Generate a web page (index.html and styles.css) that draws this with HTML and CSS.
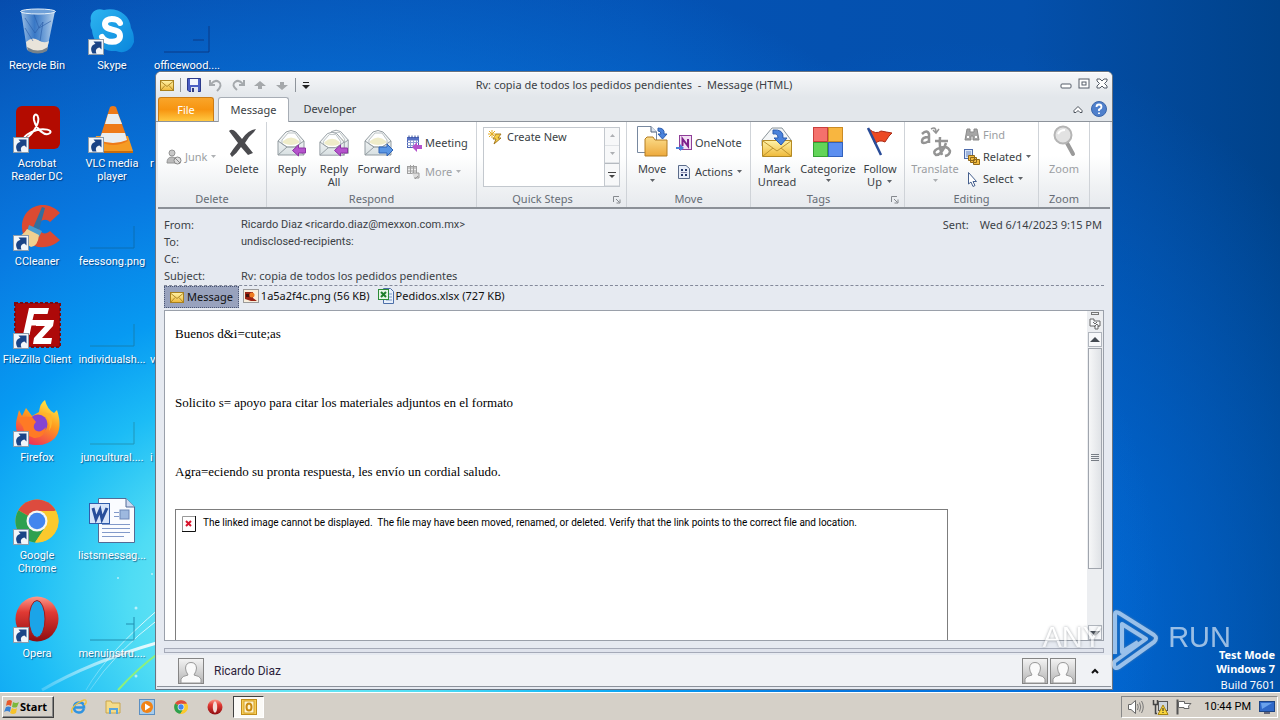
FILE: index.html
```html
<!DOCTYPE html>
<html lang="en">
<head>
<meta charset="utf-8">
<title>Rv: copia de todos los pedidos pendientes - Message (HTML)</title>
<link rel="stylesheet" href="styles.css">
</head>
<body>
<svg class="defs" aria-hidden="true">
  <defs>
    <linearGradient id="g-env" x1="0" y1="0" x2="0" y2="1"><stop offset="0" stop-color="#fff3a8"/><stop offset="1" stop-color="#efb93a"/></linearGradient>
    <linearGradient id="g-grey" x1="0" y1="0" x2="0" y2="1"><stop offset="0" stop-color="#fff"/><stop offset="1" stop-color="#d8e0e2"/></linearGradient>
    <linearGradient id="g-avatar" x1="0" y1="0" x2="0" y2="1"><stop offset="0" stop-color="#f4f4f4"/><stop offset="1" stop-color="#b4b4b4"/></linearGradient>
    <linearGradient id="g-opera" x1="0" y1="0" x2="0" y2="1"><stop offset="0" stop-color="#ff9a8a"/><stop offset=".35" stop-color="#e03a34"/><stop offset="1" stop-color="#8e0c10"/></linearGradient>
    <linearGradient id="g-fox" x1=".8" y1="0" x2=".3" y2="1"><stop offset="0" stop-color="#fff04a"/><stop offset=".45" stop-color="#ff9a1e"/><stop offset="1" stop-color="#ee2c5c"/></linearGradient>
    <linearGradient id="g-skype" x1="0" y1="0" x2="1" y2="1"><stop offset="0" stop-color="#2cb4f0"/><stop offset="1" stop-color="#0a86dc"/></linearGradient>
    <linearGradient id="g-bin" x1="0" y1="0" x2="1" y2="0"><stop offset="0" stop-color="#bcd6ee" stop-opacity=".85"/><stop offset=".4" stop-color="#5a90d0" stop-opacity=".6"/><stop offset="1" stop-color="#dcecf8" stop-opacity=".85"/></linearGradient>
    <linearGradient id="g-folder" x1="0" y1="0" x2="0" y2="1"><stop offset="0" stop-color="#fbdc8a"/><stop offset="1" stop-color="#eda93c"/></linearGradient>
    <linearGradient id="g-ray" x1="0" y1="1" x2="1" y2="0"><stop offset="0" stop-color="#fff" stop-opacity=".2"/><stop offset="1" stop-color="#fff" stop-opacity=".9"/></linearGradient>
    <symbol id="shortcut" viewBox="0 0 16 16"><rect x=".5" y=".5" width="15" height="15" fill="#f2f6fa" stroke="#8d9cab"/><path d="M4.500 14.500C1.500 9 4 5.500 7.500 5L5.500 2.500H13.500V10.500L11.500 8.500C8.500 9 7 11 8.500 14.500Z" fill="#1a4486"/></symbol>
    <symbol id="mail" viewBox="0 0 14 12"><rect x=".5" y="1.500" width="13" height="10" fill="url(#g-env)" stroke="#a8801e"/><path d="M1 2.500 7 7.500 13 2.500M1 11 5 6.500M13 11 9 6.500" fill="none" stroke="#b08a2a"/></symbol>
    <symbol id="person" viewBox="0 0 26 26"><rect x=".5" y=".5" width="25" height="25" fill="url(#g-avatar)" stroke="#858585"/><path d="M3 25V21Q4 18 10 17Q7.500 13 7.500 10Q8 4.500 13 4.500T18.500 10Q18.500 13 16 17Q22 18 23 21V25Z" fill="#fafafa" stroke="#999"/></symbol>
    <symbol id="openmail" viewBox="0 0 32 32"><path d="M2 15 10 6Q15 3 20 6L28 15V29H2Z" fill="url(#g-grey)" stroke="#939ca1"/><path d="M6 14 12 7H19L24 14V18L19 21H11L6 18Z" fill="#fff" stroke="#bcc3c5"/><path d="M7 15Q15 8 23 15V17Q15 21 7 17Z" fill="#efecc9"/><path d="M2 15 11 21H19L28 15M2 29 11 21M28 29 19 21" fill="none" stroke="#939ca1"/></symbol>
    <symbol id="chrome" viewBox="0 0 44 44"><circle cx="22" cy="22" r="21.500" fill="#fbc92d"/><path d="M22 22 3.400 11.200A21.500 21.500 0 0 1 40.600 11.200Z" fill="#dd4b3e"/><path d="M22 22 3.400 11.200A21.500 21.500 0 0 0 20 43.500L31 27Z" fill="#2da04f"/><path d="M22 12H41A21.500 21.500 0 0 1 20 43.500L31 27Z" fill="#fbc92d"/><circle cx="22" cy="22" r="10.500" fill="#f4f7f4"/><circle cx="22" cy="22" r="8.300" fill="#4285ee"/></symbol>
    <symbol id="opera" viewBox="0 0 44 46"><ellipse cx="22" cy="23" rx="21.500" ry="22.500" fill="url(#g-opera)"/><ellipse cx="22" cy="23" rx="8" ry="18.500" fill="#1ba4e8" stroke="#a31c1c"/></symbol>
    <symbol id="opera-small" viewBox="0 0 16 16"><circle cx="8" cy="8" r="7.500" fill="url(#g-opera)"/><ellipse cx="8" cy="8" rx="2.200" ry="5.800" fill="#f4dcd8"/></symbol>
    <symbol id="down" viewBox="0 0 7 4"><path d="M1 0H6L3.500 3Z" fill="currentColor"/></symbol>
    <symbol id="arrow-left" viewBox="0 0 14 12"><path d="M.5 6 6.500.5V3.500H13.500V8.500H6.500V11.500Z" fill="#b553cc" stroke="#8d34a4"/></symbol>
    <symbol id="launcher" viewBox="0 0 8 8"><path d="M.5 6V.5H6M3 3 6.500 6.500M7 3.500V7H3.500" fill="none" stroke="#85898e"/></symbol>
  </defs>
</svg>

<main class="desktop">
  <svg class="rays" viewBox="0 0 160 200" aria-hidden="true">
    <path d="M42 198Q90 170 160 150" fill="none" stroke="url(#g-ray)" stroke-width="3"/>
    <path d="M86 198Q108 160 160 116M90 198Q115 160 160 126" fill="none" stroke="url(#g-ray)"/>
    <path d="M118 198Q138 176 160 160" fill="none" stroke="#8df07c" stroke-width="2"/>
    <g fill="#fff" opacity=".6"><circle cx="118" cy="86" r="1"/><circle cx="136" cy="116" r="1.500"/><circle cx="136" cy="184" r="1.500"/><circle cx="152" cy="82" r="1"/></g>
  </svg>

  <div class="icons">
    <a class="shortcut" href="#"><svg viewBox="0 0 48 48"><path d="M8 3 14 42Q25 48 34 42L42 3Z" fill="url(#g-bin)"/><path d="M13 34Q19 28 25 32T36 33L34 41Q25 47 14 41Z" fill="#e9e4da"/><path d="M12 10 22 25 30 14 27 33M20 4 26 20 38 13M12 20 20 33" fill="none" stroke="#2a5ca6" opacity=".6"/><path d="M14 39Q25 46 35 39L34 43Q25 48 15 43Z" fill="#77828b"/><ellipse cx="25" cy="3.500" rx="17.500" ry="2.500" fill="#6fa0d8" stroke="#e8f2fa"/></svg><span>Recycle Bin</span></a>
    <a class="shortcut" href="#"><svg viewBox="0 0 48 48"><path d="M3 13C1 5 8-1 16 2C30-1 42 7 43 20C46 25 46 31 46 34C43 43 35 46 28 43C15 44 5 35 4 22C2 19 2 16 3 13Z" fill="url(#g-skype)"/><path d="M32 15C30 10 17 9 17 16C17 24 32 19 32 28C32 36 17 35 14 29" fill="none" stroke="#fff" stroke-width="6" stroke-linecap="round"/><use href="#shortcut" x="0" y="31" width="16" height="16"/></svg><span>Skype</span></a>
    <a class="shortcut" href="#"><svg viewBox="0 0 48 48"><path d="M1 44H46V18M30 32H41" fill="none" stroke="#0a3a86"/></svg><span>officewood....</span></a>

    <a class="shortcut" href="#"><svg viewBox="0 0 48 48"><rect x="3" y="0" width="44" height="43" rx="6" fill="#b30b00"/><path d="M12 33C20 29 27 16 25 11C24 7 20 8 21 14C23 23 32 31 37 27C40 24 31 22 24 24C17 26 9 31 12 33Z" fill="none" stroke="#fff" stroke-width="2"/><use href="#shortcut" x="0" y="31" width="16" height="16"/></svg><span>Acrobat Reader DC</span></a>
    <a class="shortcut" href="#"><svg viewBox="0 0 48 48"><path d="M8 30H40L45 45H4Z" fill="#f59b24"/><path d="M4 45H45V47H4Z" fill="#c86c0c"/><path d="M22 1Q25-1 28 1L40 35Q25 43 11 35Z" fill="#ee7a17"/><path d="M20 8H30L34 18H17ZM14 27H37L39 34Q25 40 11 34Z" fill="#e9edef"/><use href="#shortcut" x="0" y="31" width="16" height="16"/></svg><span>VLC media player</span></a>
    <a class="shortcut cut" href="#"><svg viewBox="0 0 48 48"></svg><span>r</span></a>

    <a class="shortcut" href="#"><svg viewBox="0 0 48 48"><path d="M47 9C32-7 8 3 9 24C10 44 33 49 47 36L37 27C33 31 27 30 26 24C25 17 32 13 37 18Z" fill="#dc4a31"/><path d="M20 24 29 3 32 4 26 26Z" fill="#336f9d"/><path d="M16 21 29 27 26 33 14 28Z" fill="#4a9dd0"/><path d="M14 25 26 31Q25 42 18 43L2 33Q10 32 14 25Z" fill="#f0d090"/><use href="#shortcut" x="0" y="31" width="16" height="16"/></svg><span>CCleaner</span></a>
    <a class="shortcut" href="#"><svg viewBox="0 0 48 48"><path d="M2 44H46V22" fill="none" stroke="#0b6fb4"/></svg><span>feessong.png</span></a>
    <i></i>

    <a class="shortcut" href="#"><svg viewBox="0 0 48 48"><rect x="2" y="1" width="45" height="44" fill="#ad0909" stroke="#7c0b12" stroke-width="2" stroke-dasharray="3 2"/><path d="M10 33 16 6H36L34.500 12H21L19.500 18H30L29 23.500H18.500L16.500 33ZM24 18H41L40 24L29 36H39L38 42H20L21 36L32 24H23Z" fill="#fff"/><use href="#shortcut" x="0" y="31" width="16" height="16"/></svg><span>FileZilla Client</span></a>
    <a class="shortcut" href="#"><svg viewBox="0 0 48 48"><path d="M2 44H46V22" fill="none" stroke="#1580b4"/></svg><span>individualsh...</span></a>
    <a class="shortcut cut" href="#"><svg viewBox="0 0 48 48"></svg><span>v</span></a>

    <a class="shortcut" href="#"><svg viewBox="0 0 48 48"><path d="M6 10 9 16 13 8 19 16 26 12Q27 3 32 0Q34 9 41 13L44 10Q50 28 42 38Q34 46 22 45C8 44 0 32 4 18Z" fill="url(#g-fox)"/><circle cx="25" cy="24" r="9.500" fill="#8544d2"/><path d="M4 18Q11 16 19 17L23 22Q19 26 22 30Q27 34 33 27Q31 39 21 38Q11 35 10 27Z" fill="#ff7a25"/><path d="M30 12Q39 20 36 31Q41 24 38 14Z" fill="#ffb52d"/><use href="#shortcut" x="0" y="31" width="16" height="16"/></svg><span>Firefox</span></a>
    <a class="shortcut" href="#"><svg viewBox="0 0 48 48"><path d="M2 44H46V22" fill="none" stroke="#2195b8"/></svg><span>juncultural....</span></a>
    <a class="shortcut cut" href="#"><svg viewBox="0 0 48 48"></svg><span>i</span></a>

    <a class="shortcut" href="#"><svg viewBox="0 0 48 48"><use href="#chrome" x="2" y="1" width="44" height="44"/><use href="#shortcut" x="0" y="31" width="16" height="16"/></svg><span>Google Chrome</span></a>
    <a class="shortcut" href="#"><svg viewBox="0 0 48 48"><path d="M10.500.5H38L46.500 9V44.500H10.500Z" fill="#fafcff" stroke="#536b95"/><path d="M38 .5V9H46.500" fill="#cedaf0" stroke="#536b95"/><path d="M14 26.500H42M14 30.500H42M14 34.500H42M14 38.500H36M26 14.500H31M26 18.500H31" stroke="#8199c9"/><rect x="32" y="12" width="9" height="9" fill="#9db8df" stroke="#6d87b8"/><rect x="1.500" y="5.500" width="20" height="20" fill="#d8e5fa" stroke="#315dab"/><path d="M5 10 8 21 12 12 14 21 19 10" fill="none" stroke="#284e9b" stroke-width="3"/></svg><span>listsmessag...</span></a>
    <i></i>

    <a class="shortcut" href="#"><svg viewBox="0 0 48 48"><use href="#opera" x="2" y="0" width="44" height="46"/><use href="#shortcut" x="0" y="31" width="16" height="16"/></svg><span>Opera</span></a>
    <a class="shortcut" href="#"><svg viewBox="0 0 48 48"><path d="M2 44H46V21M38 28H46" fill="none" stroke="#208eb0"/></svg><span>menuinstru....</span></a>
  </div>

  <section class="window">
    <header class="titlebar">
      <div class="quick">
        <svg class="i14" viewBox="0 0 14 12"><use href="#mail"/></svg>
        <span class="bar"></span>
        <button aria-label="Save"><svg class="i14" viewBox="0 0 14 14"><path d="M.5.5H13.500V13.500H2L.5 12Z" fill="#4c5fc4" stroke="#2b3a8c"/><rect x="3" y="1" width="8" height="6" fill="#f2f5fd"/><rect x="4" y="9" width="7" height="5" fill="#dfe5f4"/><rect x="5" y="10" width="2" height="4" fill="#303c80"/></svg></button>
        <button aria-label="Undo"><svg class="i14" viewBox="0 0 14 14"><path d="M1 2V7H6M2 6Q6 1 10 4T8 13" fill="none" stroke="#a5a9ad" stroke-width="2"/></svg></button>
        <button aria-label="Redo"><svg class="i14" viewBox="0 0 14 14"><path d="M13 2V7H8M12 6Q8 1 4 4T6 12" fill="none" stroke="#a5a9ad" stroke-width="2"/></svg></button>
        <button aria-label="Previous item"><svg class="i14" viewBox="0 0 14 14"><path d="M7 3 13 8H9V11H5V8H1Z" fill="#a5a8ab"/></svg></button>
        <button aria-label="Next item"><svg class="i14" viewBox="0 0 14 14"><path d="M7 12 13 7H9V4H5V7H1Z" fill="#a5a8ab"/></svg></button>
        <span class="bar"></span>
        <button aria-label="Customize"><svg class="i8" viewBox="0 0 8 8"><path d="M1 1.500H7" stroke="#222"/><path d="M0 4H8L4 8Z" fill="#222"/></svg></button>
      </div>
      <h1>Rv: copia de todos los pedidos pendientes&nbsp; -&nbsp; Message (HTML)</h1>
      <div class="controls">
        <button aria-label="Minimize"><svg viewBox="0 0 12 12"><rect x="1" y="6" width="10" height="4" rx="1" fill="#fff" stroke="#555d68"/></svg></button>
        <button aria-label="Restore"><svg viewBox="0 0 12 12"><rect x="1" y="1" width="10" height="9" fill="#fff" stroke="#555d68"/><rect x="4" y="4" width="4" height="3" fill="#fff" stroke="#555d68"/></svg></button>
        <button aria-label="Close"><svg viewBox="0 0 12 12"><path d="M1 1H4L6 3 8 1H11V3L8.500 5.500 11 8V10H8L6 8 4 10H1V8L3.500 5.500 1 3Z" fill="#fff" stroke="#555d68"/></svg></button>
      </div>
    </header>

    <nav class="tabs">
      <button class="file">File</button>
      <button class="tab active">Message</button>
      <button class="tab">Developer</button>
      <span class="grow"></span>
      <button class="help" aria-label="Collapse ribbon"><svg class="i10" viewBox="0 0 10 10"><path d="M1 6.500 5 2.500 9 6.500V8.500H7L5 6.500 3 8.500H1Z" fill="#fff" stroke="#4c535c"/></svg></button>
      <button class="help" aria-label="Help"><svg class="i16" viewBox="0 0 16 16"><circle cx="8" cy="8" r="7.500" fill="#4f80cc" stroke="#3a66ac"/><path d="M5.500 6Q5.500 3.500 8 3.500T10.500 6Q10.500 7.500 8 8.500V10M8 11.500V13" fill="none" stroke="#fff" stroke-width="1.800"/></svg></button>
    </nav>

    <div class="ribbon">
      <section class="group g-delete">
        <div class="tools">
          <button class="small off"><svg class="i16" viewBox="0 0 16 16"><circle cx="6" cy="4" r="3" fill="#c8c8c8" stroke="#949494"/><path d="M1 14Q1 8 6 8T10 14Z" fill="#bbb" stroke="#949494"/><circle cx="11.500" cy="11.500" r="3.500" fill="#ddd" stroke="#888"/><path d="M9 9 14 14" stroke="#888"/></svg>Junk<svg class="caret"><use href="#down"/></svg></button>
          <button class="big w40"><svg class="i32" viewBox="0 0 32 32"><path d="M3 5Q6 2 10 6L16 13Q22 4 30 3L28 6Q23 10 19 17L27 27 22 29 15 21Q11 27 6 31L4 28Q7 23 12 17Z" fill="#4b4b4f"/></svg>Delete</button>
        </div>
        <h2>Delete</h2>
      </section>
      <section class="group g-respond">
        <div class="tools">
          <button class="big w42"><svg class="i32" viewBox="0 0 32 32"><use href="#openmail"/><use href="#arrow-left" x="16" y="18" width="14" height="13"/></svg>Reply</button>
          <button class="big w42"><svg class="i32" viewBox="0 0 32 32"><use href="#openmail" x="4" y="0" width="30" height="30"/><use href="#openmail" x="0" y="2" width="30" height="30"/><use href="#arrow-left" x="16" y="18" width="14" height="13"/></svg>Reply<br>All</button>
          <button class="big w48"><svg class="i32" viewBox="0 0 32 32"><use href="#openmail"/><path d="M30 24 24 18V21H16V27H24V30Z" fill="#5a96e4" stroke="#2f62b4"/></svg>Forward</button>
          <div class="stack two">
            <button class="small"><svg class="i16" viewBox="0 0 16 16"><rect x="1.500" y="2.500" width="11" height="10" fill="#fff" stroke="#4a62b4"/><path d="M1 4H13" stroke="#5670c4" stroke-width="3"/><path d="M1 7.500H13M1 10.500H13M4.500 5V12M7.500 5V12M10.500 5V12" stroke="#8ea0d4"/><path d="M3 .5V3M6 .5V3M9 .5V3M12 .5V3" stroke="#334c98"/><path d="M6 12 11 7V10H16V14H11V17Z" fill="#b553cc"/></svg>Meeting</button>
            <button class="small off"><svg class="i16" viewBox="0 0 16 16"><rect x="1.500" y="2.500" width="9" height="7" fill="#eee" stroke="#a0a0a0"/><path d="M1 4H11M1 7H11M4.500 1V9M7.500 1V9" stroke="#a0a0a0"/><path d="M6 9H13V14H8M12 12 9 15" fill="#ddd" stroke="#999"/></svg>More<svg class="caret"><use href="#down"/></svg></button>
          </div>
        </div>
        <h2>Respond</h2>
      </section>
      <section class="group g-quick">
        <div class="tools">
          <div class="gallery">
            <button class="step"><svg class="i16" viewBox="0 0 16 16"><path d="M9 5H14L11 9H14L7 15 9 10H6Z" fill="#f7cd45" stroke="#a67b22"/><path d="M5 1V9M1 5H9M2 2 8 8M8 2 2 8" stroke="#e4ac22"/></svg>Create New</button>
            <div class="spin">
              <button class="off" aria-label="Up"><svg class="caret" viewBox="0 0 7 4"><path d="M1 3H6L3.500 0Z" fill="currentColor"/></svg></button>
              <button class="off" aria-label="Down"><svg class="caret"><use href="#down"/></svg></button>
              <button aria-label="More steps"><svg class="i8" viewBox="0 0 8 8"><path d="M0 1.500H8" stroke="#444"/><path d="M1 4H7L4 7Z" fill="#444"/></svg></button>
            </div>
          </div>
        </div>
        <h2>Quick Steps</h2><svg class="launch"><use href="#launcher"/></svg>
      </section>
      <section class="group g-move">
        <div class="tools">
          <button class="big w42"><svg class="i32" viewBox="0 0 32 32"><path d="M1.500.5H15L20.500 6V26.500H1.500Z" fill="#fff" stroke="#7889a0"/><path d="M15 .5V6H20.500" fill="#dbe4f0" stroke="#52627c"/><path d="M9 13 11 11H17L19 14H31V30H9Z" fill="url(#g-folder)" stroke="#b37c22"/><path d="M22 2Q29 2 28 8H31L26.500 13 22 8H25Q25 5 22 5Z" fill="#4a82dc" stroke="#2b5cae"/></svg>Move<svg class="caret"><use href="#down"/></svg></button>
          <div class="stack two">
            <button class="small"><svg class="i16" viewBox="0 0 16 16"><rect x="3.500" y=".5" width="12" height="14" fill="#f3e0f4" stroke="#8f3f98"/><path d="M6.500 11V4L12 11V4" fill="none" stroke="#80218c" stroke-width="2"/><path d="M0 12H4V9L8 13 4 16V14H0Z" fill="#4a82dc"/></svg>OneNote</button>
            <button class="small"><svg class="i16" viewBox="0 0 16 16"><path d="M2.500 1.500H10L13.500 4.500V14.500H2.500Z" fill="#e8eef9" stroke="#5b6c8a"/><path d="M5 6H7M9 6H11M5 11H7M9 11H11" stroke="#26396a" stroke-width="2"/><path d="M5 8.500H11" stroke="#88a"/></svg>Actions<svg class="caret"><use href="#down"/></svg></button>
          </div>
        </div>
        <h2>Move</h2>
      </section>
      <section class="group g-tags">
        <div class="tools">
          <button class="big w44"><svg class="i32" viewBox="0 0 32 32"><path d="M1 14 11 2H21L30 14V20H1Z" fill="#f4f6f7" stroke="#8b9499"/><path d="M1.500 14.500H30.500V30.500H1.500Z" fill="url(#g-env)" stroke="#b48a24"/><path d="M2 15 16 25 30 15M2 30 12 22M30 30 20 22" fill="none" stroke="#bd942e"/><path d="M12 4Q23 3 22 12H26L20 19 13 12H17Q17 7 12 8Z" fill="#4a82dc" stroke="#2b5cae"/></svg>Mark<br>Unread</button>
          <button class="big w58"><svg class="i32" viewBox="0 0 32 32"><rect x="1.500" y="1.500" width="14" height="14" fill="#f5716c" stroke="#c93f3c"/><rect x="16.500" y="1.500" width="14" height="14" fill="#f8b640" stroke="#cb8b24"/><rect x="1.500" y="16.500" width="14" height="14" fill="#62d458" stroke="#35a034"/><rect x="16.500" y="16.500" width="14" height="14" fill="#5c8ff0" stroke="#3262bd"/></svg>Categorize<svg class="caret"><use href="#down"/></svg></button>
          <button class="big w46"><svg class="i32" viewBox="0 0 32 32"><path d="M5 3Q12 9 17 5Q22 6 28 7L25 10 21 16Q15 13 11 18Z" fill="#ec4a24" stroke="#aa2b16"/><path d="M4 2 17 29" stroke="#294c98" stroke-width="2.500"/></svg>Follow<br><span>Up <svg class="caret"><use href="#down"/></svg></span></button>
        </div>
        <h2>Tags</h2><svg class="launch"><use href="#launcher"/></svg>
      </section>
      <section class="group g-edit">
        <div class="tools">
          <button class="big w52 off"><svg class="i32" viewBox="0 0 32 32"><path d="M3 8Q8 3 10 8V17M10 11Q3 11 3 15T10 15" fill="none" stroke="#949494" stroke-width="2.500"/><path d="M12 3Q17 0 17 6M14 4 17 7 20 3" fill="none" stroke="#949494" stroke-width="1.500"/><path d="M16 15H29M21 11Q20 21 23 29M27 17Q23 29 17 29Q13 26 18 23Q28 18 31 25Q31 29 26 30" fill="none" stroke="#949494" stroke-width="2.500"/></svg>Translate<svg class="caret"><use href="#down"/></svg></button>
          <div class="stack three">
            <button class="small off"><svg class="i16" viewBox="0 0 16 16"><path d="M3 2H6V5H10V2H13L15 13H9V9H7V13H1Z" fill="#a6a6a6" stroke="#8a8a8a"/><path d="M3 10H5M11 10H13" stroke="#fff" stroke-width="2"/></svg>Find</button>
            <button class="small"><svg class="i16" viewBox="0 0 16 16"><rect x=".5" y=".5" width="8" height="9" fill="#dce8fa" stroke="#4f6cab"/><path d="M2 3H7M2 5H7M2 7H7" stroke="#6483bf"/><path d="M4.500 6.500H10.500V11.500H4.500ZM6.500 8.500H12.500V13.500H6.500ZM9.500 10.500H15.500V15.500H9.500Z" fill="#f2bb41" stroke="#8f681a"/></svg>Related<svg class="caret"><use href="#down"/></svg></button>
            <button class="small"><svg class="i16" viewBox="0 0 16 16"><path d="M4.500 1.500V13L7 11 9 15.500 11 14.500 9 10.500H12.500Z" fill="#fff" stroke="#46608e"/></svg>Select<svg class="caret"><use href="#down"/></svg></button>
          </div>
        </div>
        <h2>Editing</h2>
      </section>
      <section class="group g-zoom">
        <div class="tools">
          <button class="big w42 off"><svg class="i32" viewBox="0 0 32 32"><path d="M19 17 25 28" stroke="#9a9a9a" stroke-width="4" stroke-linecap="round"/><circle cx="15" cy="9" r="8.500" fill="#e2e2e2" stroke="#b5b5b5" stroke-width="2"/><path d="M10 8Q12 4 17 4" fill="none" stroke="#fff" stroke-width="2"/></svg>Zoom</button>
        </div>
        <h2>Zoom</h2>
      </section>
    </div>

    <section class="info">
      <dl>
        <dt>From:</dt><dd class="address">Ricardo Diaz &lt;ricardo.diaz@mexxon.com.mx&gt;</dd>
        <dt>To:</dt><dd class="address">undisclosed-recipients:</dd>
        <dt>Cc:</dt><dd></dd>
        <dt>Subject:</dt><dd>Rv: copia de todos los pedidos pendientes</dd>
      </dl>
      <p class="sent"><span>Sent:</span><span>Wed 6/14/2023 9:15 PM</span></p>
    </section>

    <nav class="attachments">
      <button class="selected"><svg class="i14" viewBox="0 0 14 12"><use href="#mail"/></svg>Message</button>
      <button><svg class="i16" viewBox="0 0 16 16"><rect x=".5" y="1.500" width="15" height="13" fill="#f8eedc" stroke="#9a9a9a"/><path d="M2 4H10V10L14 13H8L2 11Z" fill="#9b2313"/><circle cx="9" cy="7" r="2.500" fill="#ef7c20"/><path d="M3 6H6V9H3Z" fill="#43120c"/></svg>1a5a2f4c.png (56 KB)</button>
      <button><svg class="i16" viewBox="0 0 16 16"><path d="M5.500.5H12.500L15.500 3.500V15.500H5.500Z" fill="#e8f0fb" stroke="#4d6fa8"/><path d="M8 6H14M8 9H14M8 12H14" stroke="#7e9cc8"/><rect x=".5" y="1.500" width="10" height="10" fill="#e8f6e8" stroke="#2c8b37"/><path d="M3 4 8 9M8 4 3 9" stroke="#1f7f2b" stroke-width="2"/></svg>Pedidos.xlsx (727 KB)</button>
    </nav>

    <div class="reader">
      <article>
        <p>Buenos d&amp;i=cute;as</p>
        <p>Solicito s= apoyo para citar los materiales adjuntos en el formato</p>
        <p>Agra=eciendo su pronta respuesta, les envío un cordial saludo.</p>
        <div class="missing"><svg viewBox="0 0 14 16"><path d="M.5 15.500V.5H13.500" fill="none" stroke="#999"/><path d="M0 15.500H13.500V0" fill="none" stroke="#111"/><path d="M4 5 9 10M9 5 4 10" stroke="#d8142c" stroke-width="2"/></svg><span>The linked image cannot be displayed.&nbsp; The file may have been moved, renamed, or deleted. Verify that the link points to the correct file and location.</span></div>
      </article>
      <div class="scroll">
        <span class="split"></span>
        <button class="jump" aria-label="Browse"><svg class="i12" viewBox="0 0 12 12"><path d="M1 1H5V3H11V8H9V11H6V8H1ZM4 4 6 6 8 4M5 9 8 6 10 9" fill="#f7f8fa" stroke="#666"/></svg></button>
        <button aria-label="Scroll up"><svg class="i10" viewBox="0 0 10 10"><path d="M0 7H10L5 2Z" fill="#444a52"/></svg></button>
        <div class="track"><span class="thumb"><svg viewBox="0 0 8 8"><path d="M0 .5H8M0 2.500H8M0 4.500H8M0 6.500H8" stroke="#777d85"/></svg></span></div>
        <button aria-label="Scroll down"><svg class="i10" viewBox="0 0 10 10"><path d="M0 3H10L5 8Z" fill="#444a52"/></svg></button>
      </div>
    </div>
    <div class="splitter"></div>
    <footer class="people">
      <svg class="avatar"><use href="#person"/></svg><span>Ricardo Diaz</span>
      <span class="grow"></span>
      <svg class="avatar"><use href="#person"/></svg><svg class="avatar"><use href="#person"/></svg>
      <button aria-label="Expand"><svg class="i8" viewBox="0 0 8 6"><path d="M1 5 4 2 7 5" fill="none" stroke="#111" stroke-width="2"/></svg></button>
    </footer>
  </section>

  <p class="build"><b>Test Mode</b><b>Windows 7</b><span>Build 7601</span></p>
  <div class="brand"><span class="any">ANY</span><svg viewBox="0 0 50 62"><path d="M5 44V4Q5 1 9 3L44 25Q48 28 44 32L9 57Q4 60 4 54V52L36 29 12 14V42L28 32" fill="none" stroke="#fff" stroke-width="4" stroke-linejoin="round"/></svg><span class="run">RUN</span></div>
</main>

<footer class="taskbar">
  <button class="start"><svg class="i16" viewBox="0 0 16 16"><path d="M3 2Q6 0 8 2L7 7Q4 5 2 7Z" fill="#e8592b"/><path d="M9 3Q12 5 15 3L13 8Q11 9 8 8Z" fill="#7cb83c"/><path d="M2 8Q4 7 7 8L6 13Q3 11 0 13Z" fill="#3a82d4"/><path d="M8 9Q11 11 13 9L12 14Q9 16 6 14Z" fill="#f6c22a"/></svg>Start</button>
  <button aria-label="Internet Explorer"><svg class="i16" viewBox="0 0 16 16"><path d="M13 10Q11 14 7.500 13.500Q3 13 3 8.500T8 3.500T13 8.500H4" fill="none" stroke="#2f93e0" stroke-width="2.500"/><path d="M1 14Q-1 9 7 4T15 2Q16 4 13 6" fill="none" stroke="#efc23c" stroke-width="1.300"/></svg></button>
  <button aria-label="Explorer"><svg class="i16" viewBox="0 0 16 16"><path d="M1 2H6L7 4H15V14H1Z" fill="#f5dc8a" stroke="#c9a64c"/><path d="M5 15V10H12V15" fill="none" stroke="#5aa5dc" stroke-width="2"/></svg></button>
  <button aria-label="Media Player"><svg class="i16" viewBox="0 0 16 16"><rect x=".5" y=".5" width="15" height="15" fill="#a7ccec" stroke="#5b8fc2"/><circle cx="8" cy="8" r="6" fill="#f18316"/><path d="M6 4.500 11.500 8 6 11.500Z" fill="#fff"/></svg></button>
  <button aria-label="Chrome"><svg class="i14"><use href="#chrome"/></svg></button>
  <button aria-label="Opera"><svg class="i16"><use href="#opera-small"/></svg></button>
  <button class="running" aria-label="Outlook"><svg class="i16" viewBox="0 0 16 16"><rect x=".5" y=".5" width="15" height="15" fill="#f6cf5a" stroke="#c28d1a"/><rect x="3" y="2" width="10" height="12" fill="#fdf3cf" stroke="#d59e22"/><ellipse cx="8" cy="8" rx="2.500" ry="3.500" fill="none" stroke="#c98a10" stroke-width="2"/></svg></button>
  <span class="grow"></span>
  <div class="tray">
    <svg class="i16" viewBox="0 0 16 16"><path d="M.5 5.500H3L7.500 1.500V14.500L3 10.500H.5Z" fill="#fff" stroke="#666"/><path d="M9.500 5Q11 8 9.500 11M11.500 3.500Q14 8 11.500 12.500M13.500 2Q17 8 13.500 14" fill="none" stroke="#777"/></svg>
    <svg class="i16" viewBox="0 0 16 16"><path d="M1.500 1V5.500H5.500V1M3.500 5V14.500H5" fill="none" stroke="#444" stroke-width="1.500"/><rect x="6.500" y="2.500" width="9" height="9" fill="#cdd5dc" stroke="#555"/><path d="M11 6 16 15.500H6Z" fill="#f8d53c" stroke="#a8830f"/><path d="M11 9V12M11 13V14" stroke="#222"/></svg>
    <svg class="i16" viewBox="0 0 16 16"><path d="M1.500.5V15.500" stroke="#555" stroke-width="2"/><path d="M2.500 2.500H8.500V4.500H15L12.500 7L13 9.500H8V8.500H2.500Z" fill="#fff" stroke="#666"/></svg>
    <time>10:44 PM</time>
    <svg class="i16" viewBox="0 0 16 16"><rect x=".5" y="2.500" width="15" height="10" fill="#3069c8" stroke="#1c4484"/><path d="M2 4H13L3 10Z" fill="#6aa2ec"/><path d="M5 14H11" stroke="#667" stroke-width="2"/></svg>
  </div>
</footer>
</body>
</html>
```

FILE: styles.css
```css
:root {
  --ui: "Noto Sans", "Open Sans", sans-serif;
  --shell: Roboto, "Noto Sans", sans-serif;
  --ink: #3b3f45;
}
* { box-sizing: border-box; }
body {
  margin: 0;
  min-height: 100vh;
  display: flex;
  flex-direction: column;
  font: 11px/12px var(--ui);
  color: var(--ink);
}
h1, h2, p, dl, dd { margin: 0; font: inherit; }
svg { display: block; flex: none; overflow: visible; }
button {
  font: inherit;
  color: inherit;
  padding: 0;
  border: 0;
  background: none;
}
.defs { position: absolute; width: 0; height: 0; }
.grow { flex: 1; }
.i8 { width: 8px; height: 8px; }
.i10 { width: 10px; height: 10px; }
.i12 { width: 12px; height: 12px; }
.i14 { width: 14px; height: 14px; }
.i16 { width: 16px; height: 16px; }
.i32 { width: 32px; height: 32px; }
.caret { width: 7px; height: 4px; }

/* Desktop */
.desktop {
  flex: 1;
  position: relative;
  overflow: hidden;
  background:
    radial-gradient(ellipse 860px 680px at 300px 600px, #8ff4f4 0, #4fdcf4 20%, #1cbcf6 32%, #079af2 44%, #0878e0 62%, rgba(4, 88, 200, 0) 100%),
    radial-gradient(ellipse 500px 600px at 950px 640px, #0070e4 0, rgba(0, 90, 200, 0) 100%),
    linear-gradient(90deg, #0646a6 0, #0452b4 50%, #0450ac 80%, #00428a 100%);
}
.rays {
  position: absolute;
  left: 0;
  bottom: 0;
  width: 160px;
  height: 200px;
}
.icons {
  position: relative;
  display: grid;
  grid-template-columns: repeat(3, 74px);
  grid-template-rows: repeat(6, 98px) 80px;
  column-gap: 1px;
  padding-top: 8px;
  width: max-content;
}
.shortcut {
  display: flex;
  flex-direction: column;
  align-items: center;
  gap: 3px;
  font: 11px/13px var(--shell);
  color: #fff;
  text-align: center;
  text-decoration: none;
  text-shadow: 1px 1px 1px rgba(0, 30, 80, .6);
}
.shortcut svg { width: 48px; height: 48px; }
.shortcut span { max-width: 74px; }
.cut { align-items: flex-start; }

/* Message window */
.window {
  position: absolute;
  inset: 71px 167px 2px 155px;
  display: flex;
  flex-direction: column;
  padding: 0 2px 2px;
  overflow: hidden;
  border: 1px solid #6b7480;
  border-radius: 6px 6px 0 0;
  background: #e6eaf1;
}
.titlebar, .tabs { background: #e3e7eb; }
.titlebar {
  display: grid;
  grid-template-columns: 1fr auto 1fr;
  align-items: center;
  height: 25px;
  margin: 0 -2px;
  padding: 0 4px;
  border-top: 1px solid #fff;
  background: linear-gradient(#f6f7f9, #e3e7eb);
}
.quick { display: flex; align-items: center; gap: 8px; }
.bar { width: 1px; height: 14px; margin: 0 -2px; background: #8e949b; }
.controls { display: flex; justify-content: flex-end; gap: 6px; padding-bottom: 2px; }
.controls svg { width: 12px; height: 12px; }
.titlebar h1, .quick { padding-bottom: 1px; }
.tabs {
  display: flex;
  align-items: flex-end;
  height: 25px;
  margin: 0 -2px;
  padding: 0 2px;
  border-bottom: 1px solid #8d939b;
}
.tabs button { height: 24px; }
.file {
  width: 56px;
  margin-right: 4px;
  border: 1px solid #cb7c16;
  border-bottom: 0;
  border-radius: 3px 3px 0 0;
  background: linear-gradient(#f9a52a, #f79410 50%, #ffc840);
  color: #fff;
}
.tab { width: 82px; }
.tabs .active {
  width: 71px;
  height: 25px;
  margin-bottom: -1px;
  border: 1px solid #a7adb5;
  border-bottom: 0;
  border-radius: 3px 3px 0 0;
  background: #fff;
}
.help { display: flex; align-items: center; margin-right: 4px; }
.help + .help { margin: 0 3px 0 4px; }

/* Ribbon */
.ribbon {
  display: flex;
  height: 87px;
  border-bottom: 2px solid #8b9097;
  background: linear-gradient(#fff 40%, #f0f2f4 75%, #e7eaee);
}
.group {
  position: relative;
  display: flex;
  flex-direction: column;
  padding: 4px 4px 1px;
  border-right: 1px solid #cfd3d8;
}
.group h2 { line-height: 14px; text-align: center; color: #666c75; }
.launch { position: absolute; right: 5px; bottom: 3px; width: 8px; height: 8px; }
.tools { flex: 1; display: flex; min-height: 0; }
.g-delete { width: 109px; }
.g-delete .tools { justify-content: space-between; padding-left: 4px; }
.g-respond { width: 210px; }
.g-quick { width: 150px; }
.g-quick h2 { padding-right: 18px; }
.g-move { width: 124px; }
.g-tags { width: 154px; }
.g-tags h2 { padding-right: 18px; }
.g-edit { width: 134px; }
.g-zoom { width: 51px; }
.big {
  display: flex;
  flex-direction: column;
  align-items: center;
  flex: none;
  line-height: 13px;
}
.big .i32 { margin-bottom: 4px; }
.big > .caret { margin-top: 4px; }
.big span { display: flex; align-items: center; gap: 4px; }
.w40 { width: 40px; }
.w42 { width: 42px; }
.w44 { width: 44px; }
.w46 { width: 46px; }
.w48 { width: 48px; }
.w52 { width: 52px; }
.w58 { width: 58px; }
.small { display: flex; align-items: center; gap: 3px; height: 22px; white-space: nowrap; }
.caret { opacity: .8; }
.off { color: #9b9ea2; }
.stack { display: flex; flex-direction: column; align-items: flex-start; padding-left: 3px; }
.two { gap: 7px; padding-top: 6px; }
.three { padding-top: 0; margin-top: -2px; }
.g-delete .small { height: 62px; }
.gallery {
  flex: 1;
  display: flex;
  align-items: stretch;
  height: 60px;
  margin: 1px 2px;
  border: 1px solid #c3c8ce;
  background: #fff;
}
.step { flex: 1; display: flex; gap: 4px; padding: 1px 3px; line-height: 16px; }
.spin { display: grid; width: 15px; border-left: 1px solid #c3c8ce; }
.spin button { display: grid; place-items: center; background: #f7f8f9; border-bottom: 1px solid #dfe2e5; }
.spin button:last-child { border-top: 1px solid #b5bac0; }

/* Message header */
.info {
  display: flex;
  justify-content: space-between;
  margin: 0 6px;
  padding-top: 7px;
  line-height: 17px;
}
.info dl { display: grid; grid-template-columns: 77px auto; grid-auto-rows: 17px; }
.address { font-family: var(--shell); }
.sent { display: flex; gap: 11px; padding-right: 2px; }
.attachments {
  display: flex;
  margin: 1px 6px 2px;
  height: 23px;
  border-top: 1px dashed #83899a;
  color: #111;
}
.attachments button { display: flex; align-items: center; gap: 2px; padding: 0 4px 2px; }
.attachments .selected { gap: 3px; padding: 0 5px; border: 1px dotted #4c5775; background: #98a2bd; }

/* Reading area */
.reader {
  flex: 1;
  display: flex;
  min-height: 0;
  margin: 0 6px;
  border: 1px solid #9aa0aa;
  background: #fff;
}
article {
  flex: 1;
  min-width: 0;
  overflow: hidden;
  padding: 14px 10px 0;
  font: 13px/17px "Liberation Serif", serif;
  color: #000;
}
article p { margin-bottom: 52px; }
.missing {
  display: flex;
  gap: 7px;
  height: 300px;
  margin: -23px 129px 0 0;
  padding: 6px;
  border: 1px solid #7d7d7d;
  font: 10px/13px var(--shell);
}
.missing svg { width: 14px; height: 16px; }
.scroll {
  width: 16px;
  display: flex;
  flex-direction: column;
  align-items: center;
  gap: 1px;
  background: #eceef1;
}
.scroll button {
  display: grid;
  place-items: center;
  width: 14px;
  height: 15px;
  border: 1px solid #b0b5bd;
  background: #f7f8fa;
}
.scroll .jump { border: 0; background: none; }
.split { width: 8px; height: 3px; margin-top: 1px; border: 1px solid #777; }
.track { flex: 1; width: 14px; min-height: 0; }
.thumb {
  display: grid;
  place-items: center;
  height: 80%;
  border: 1px solid #a0a5ad;
  background: linear-gradient(90deg, #f6f7f8, #dfe2e6);
}
.thumb svg { width: 8px; height: 8px; }
.splitter { height: 5px; margin: 7px 6px 2px; border: 1px solid #a5aab8; background: #dfe3ec; }
.people {
  display: flex;
  align-items: center;
  gap: 2px;
  height: 32px;
  margin: 0 -1px;
  padding: 0 12px 0 21px;
  border-bottom: 1px solid #8c929b;
  background: #f0f2f5;
  font: 12px/14px var(--shell);
  color: #2c1f3c;
}
.people > span:not(.grow) { margin-left: 8px; }
.people button { margin-left: 13px; }
.avatar { width: 26px; height: 26px; }

/* Desktop overlays */
.build {
  position: absolute;
  right: 5px;
  bottom: -2px;
  display: grid;
  justify-items: end;
  font: 11px/14px var(--ui);
  color: #fff;
}
.build span { line-height: 18px; }
.brand {
  position: absolute;
  right: 49px;
  bottom: 20px;
  display: flex;
  align-items: center;
  gap: 8px;
  font: 29px/30px "Liberation Sans", sans-serif;
  opacity: .6;
  pointer-events: none;
}
.brand svg { width: 50px; height: 62px; filter: drop-shadow(0 0 1px #8a9097); }
.brand span { padding-bottom: 8px; }
.any { color: #fff; text-shadow: 0 0 3px #6a7077; }
.run { color: #fff; }

/* Taskbar */
.taskbar {
  display: flex;
  align-items: center;
  gap: 3px;
  height: 28px;
  padding: 1px 2px 0;
  border-top: 1px solid #fff;
  background: #d5d0c8;
  color: #000;
}
.taskbar > button { display: grid; place-items: center; width: 31px; height: 22px; }
.taskbar .start {
  display: flex;
  align-items: center;
  width: 52px;
  margin-right: 6px;
  padding-left: 1px;
  border: 1px solid;
  border-color: #fff #404040 #404040 #fff;
  box-shadow: inset -1px -1px #888;
  font: bold 11px/12px var(--ui);
}
.taskbar .running { border: 1px solid; border-color: #404040 #fff #fff #404040; background: #fbfaf7; }
.tray {
  display: flex;
  align-items: center;
  gap: 8px;
  height: 22px;
  padding: 0 2px 0 6px;
  border: 1px solid;
  border-color: #888 #fff #fff #888;
}
.tray time { margin-left: 4px; font-family: var(--shell); }
```
